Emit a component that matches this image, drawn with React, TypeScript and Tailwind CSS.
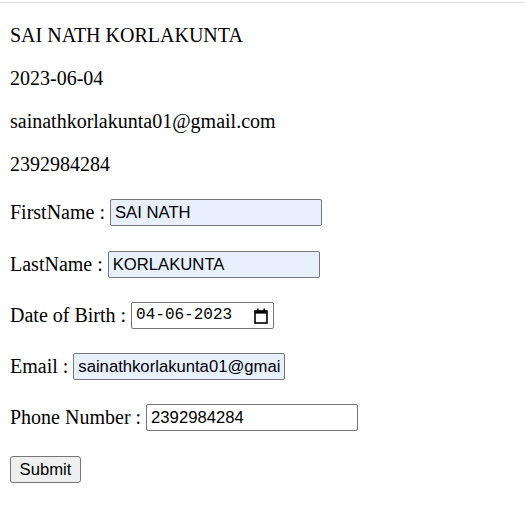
export default function App() {
  const serif = { fontFamily: '"Liberation Serif", "Times New Roman", serif' };
  const inputCls =
    "h-[27px] w-[212px] rounded-[2px] border border-[#767676] px-[4px] text-[16.67px] text-black outline-none";
  const sans = { fontFamily: '"Liberation Sans", Arial, sans-serif' };

  return (
    <div className="min-h-[532px] w-full bg-white text-black">
      <div className="h-[3px] border-b border-[#e0e0e0]" />
      <div className="px-[10px] text-[20px] leading-[23px]" style={serif}>
        <div className="mt-[21px]">SAI NATH KORLAKUNTA</div>
        <div className="mt-[20px]">2023-06-04</div>
        <div className="mt-[20px]">sainathkorlakunta01@gmail.com</div>
        <div className="mt-[20px]">2392984284</div>

        <div className="mt-[23px] flex h-[27px] items-center">
          <span>FirstName :</span>
          <input className={`ml-[5px] bg-[#e8f0fe] ${inputCls}`} style={sans} defaultValue="SAI NATH" />
        </div>
        <div className="mt-[25px] flex h-[27px] items-center">
          <span>LastName :</span>
          <input className={`ml-[5px] bg-[#e8f0fe] ${inputCls}`} style={sans} defaultValue="KORLAKUNTA" />
        </div>
        <div className="mt-[24px] flex h-[27px] items-center">
          <span>Date of Birth :</span>
          <div className="ml-[5px] flex h-[27px] w-[143px] items-center justify-between rounded-[2px] border border-[#767676] bg-white pl-[4px] pr-[5px]">
            <span className="text-[16px]" style={{ fontFamily: '"Liberation Mono", "Courier New", monospace' }}>
              04-06-2023
            </span>
            <svg width="14" height="16" viewBox="0 0 14 16" fill="none">
              <rect x="1" y="3" width="12" height="12" stroke="black" strokeWidth="1.6" />
              <rect x="1" y="3" width="12" height="2.6" fill="black" />
              <rect x="3" y="0.5" width="1.6" height="3" fill="black" />
              <rect x="9.4" y="0.5" width="1.6" height="3" fill="black" />
            </svg>
          </div>
        </div>
        <div className="mt-[24px] flex h-[27px] items-center">
          <span>Email :</span>
          <input
            className={`ml-[5px] bg-[#e8f0fe] ${inputCls}`}
            style={sans}
            defaultValue="sainathkorlakunta01@gmail.com"
          />
        </div>
        <div className="mt-[24px] flex h-[27px] items-center">
          <span>Phone Number :</span>
          <input className={`ml-[5px] bg-white ${inputCls}`} style={sans} defaultValue="2392984284" />
        </div>
        <div className="mt-[25px] flex h-[27px] items-center">
          <button
            className="h-[27px] w-[71px] rounded-[3px] border border-[#767676] bg-[#efefef] text-[16.67px]"
            style={sans}
          >
            Submit
          </button>
        </div>
      </div>
    </div>
  );
}
